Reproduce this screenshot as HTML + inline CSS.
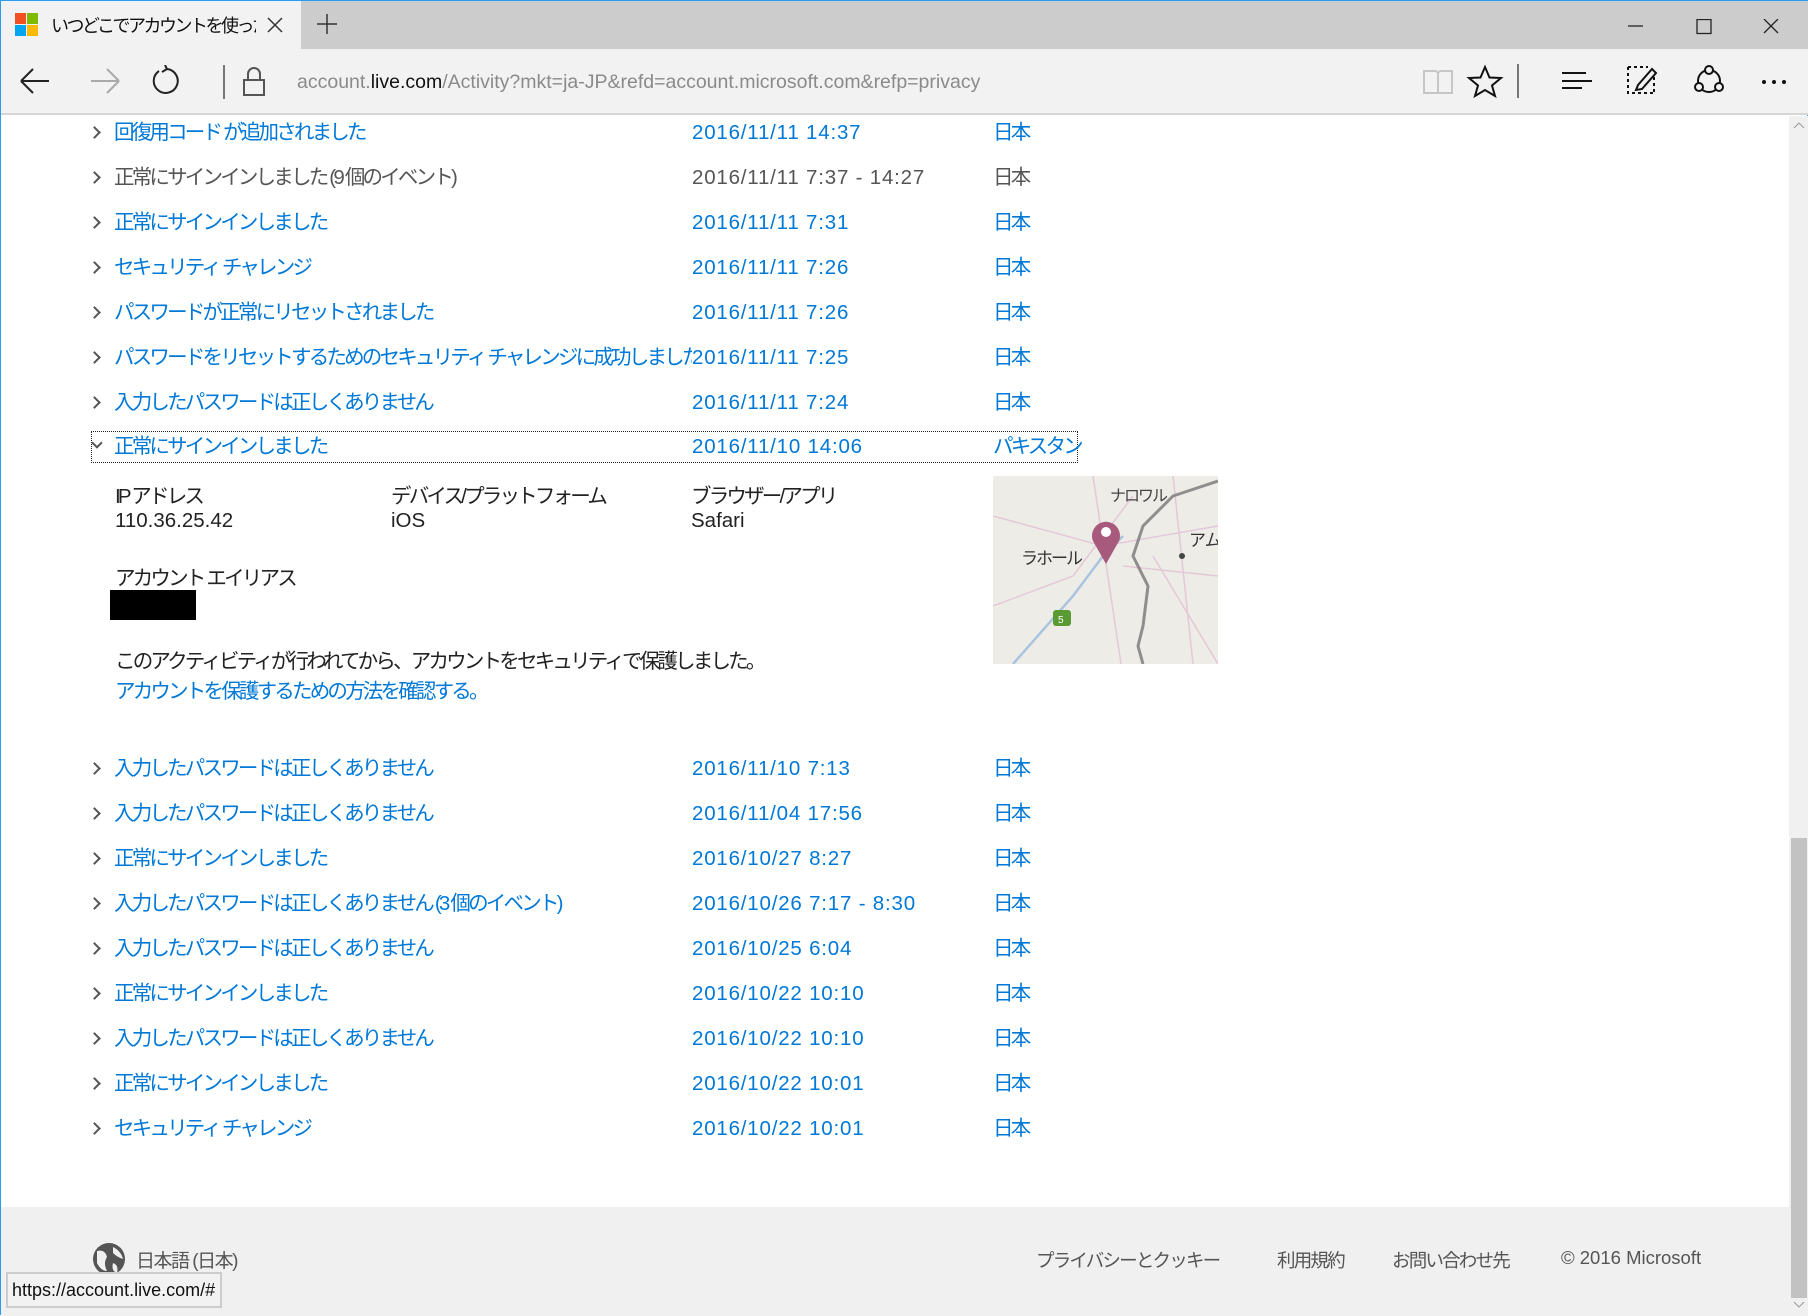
<!DOCTYPE html>
<html><head><meta charset="utf-8"><style>
*{margin:0;padding:0;box-sizing:border-box}
body{width:1808px;height:1315px;overflow:hidden;background:#fff;font-family:"Liberation Sans","Noto Sans CJK JP",sans-serif;position:relative;border:1px solid #2b9bf0}
.a{position:absolute;white-space:nowrap}
.tabbar{position:absolute;left:0;top:0;width:1808px;height:48px;background:#cccccc}
.tab{position:absolute;left:0;top:0;width:300px;height:48px;background:#f2f2f2}
.tool{position:absolute;left:0;top:48px;width:1808px;height:66px;background:#f2f2f2;border-bottom:2px solid #d6d6d6}
.r{position:absolute;font-size:20.5px;color:#0078d7;height:30px;line-height:30px;white-space:nowrap}
.j{letter-spacing:-2.8px}
.d{letter-spacing:0.8px}
.g{color:#555}
.chev{position:absolute;left:89px;width:9px;height:9px;border-right:2.5px solid #555;border-top:2.5px solid #555;transform:rotate(45deg)}
.k{color:#222;font-size:20.5px}
</style></head><body>
<div class="tabbar"></div>
<div class="tab"></div>
<svg class="a" style="left:14px;top:12px" width="24" height="24"><rect x="0" y="0" width="11" height="11" fill="#f25022"/><rect x="12" y="0" width="11" height="11" fill="#7fba00"/><rect x="0" y="12" width="11" height="11" fill="#00a4ef"/><rect x="12" y="12" width="11" height="11" fill="#ffb900"/></svg>
<div class="a" style="left:50px;top:11px;font-size:18px;color:#111;letter-spacing:-2.5px;width:205px;overflow:hidden">いつどこでアカウントを使った</div>
<svg class="a" style="left:266px;top:16px" width="16" height="16"><path d="M1 1L15 15M15 1L1 15" stroke="#333" stroke-width="1.5"/></svg>
<svg class="a" style="left:316px;top:13px" width="20" height="20"><path d="M10 0V20M0 10H20" stroke="#333" stroke-width="1.5"/></svg>
<svg class="a" style="left:1620px;top:18px" width="180" height="16"><path d="M7 7H22" stroke="#222" stroke-width="1.3"/><rect x="76" y="0.5" width="14" height="14" fill="none" stroke="#222" stroke-width="1.3"/><path d="M143 0L157 14M157 0L143 14" stroke="#222" stroke-width="1.3"/></svg>
<div class="tool"></div>
<svg class="a" style="left:18px;top:64px" width="400" height="36">
<path d="M2 16H30M2 16L14 4M2 16L14 28" stroke="#222" stroke-width="2" fill="none"/>
<path d="M72 16H100M100 16L88 4M100 16L88 28" stroke="#aaa" stroke-width="2" fill="none"/>
<path d="M140 6A12 12 0 1 0 148 4M146 0L148 4L143 7" stroke="#222" stroke-width="2" fill="none"/>
<path d="M205 -2V34" stroke="#777" stroke-width="2"/>
<rect x="225" y="15" width="20" height="15" fill="none" stroke="#555" stroke-width="2"/><path d="M229 15V9A6 6 0 0 1 241 9V15" stroke="#555" stroke-width="2" fill="none"/>
</svg>
<div class="a" style="left:296px;top:70px;font-size:19.5px;color:#8a8a8a">account.<span style="color:#111">live.com</span>/Activity?mkt=ja-JP&amp;refd=account.microsoft.com&amp;refp=privacy</div>
<svg class="a" style="left:1415px;top:62px" width="380" height="36">
<path d="M8 8H20L22 10L24 8H36V30H8Z M22 10V30" stroke="#c6c6c6" stroke-width="2" fill="none"/>
<path d="M69 4L73.5 14.5L85 15L76 22.5L79 33L69 27L59 33L62 22.5L53 15L64.5 14.5Z" stroke="#111" stroke-width="2" fill="none"/>
<path d="M102 1V35" stroke="#777" stroke-width="2"/>
<path d="M146 10H170M146 18H176M146 25H166" stroke="#111" stroke-width="2"/>
<path d="M212 4H232M212 4V30H238M238 14V30" stroke="#111" stroke-width="2" stroke-dasharray="3 3" fill="none"/><path d="M222 22L236 6L240 10L226 26L220 27Z" stroke="#111" stroke-width="2" fill="none"/>
<circle cx="293" cy="18" r="11" stroke="#111" stroke-width="2" fill="none"/><circle cx="293" cy="7" r="4" fill="#f2f2f2" stroke="#111" stroke-width="2"/><circle cx="283" cy="24" r="4" fill="#f2f2f2" stroke="#111" stroke-width="2"/><circle cx="303" cy="24" r="4" fill="#f2f2f2" stroke="#111" stroke-width="2"/>
<circle cx="348" cy="19" r="2" fill="#111"/><circle cx="358" cy="19" r="2" fill="#111"/><circle cx="368" cy="19" r="2" fill="#111"/>
</svg>

<div class="chev" style="top:127px"></div><div class="r j" style="left:113px;top:117px">回復用コード が追加されました</div><div class="r d" style="left:691px;top:117px">2016/11/11 14:37</div><div class="r j" style="left:992px;top:117px">日本</div>
<div class="chev" style="top:172px"></div><div class="r g j" style="left:113px;top:162px">正常にサインインしました (9 個のイベント)</div><div class="r g d" style="left:691px;top:162px">2016/11/11 7:37 - 14:27</div><div class="r g j" style="left:992px;top:162px">日本</div>
<div class="chev" style="top:217px"></div><div class="r j" style="left:113px;top:207px">正常にサインインしました</div><div class="r d" style="left:691px;top:207px">2016/11/11 7:31</div><div class="r j" style="left:992px;top:207px">日本</div>
<div class="chev" style="top:262px"></div><div class="r j" style="left:113px;top:252px">セキュリティ チャレンジ</div><div class="r d" style="left:691px;top:252px">2016/11/11 7:26</div><div class="r j" style="left:992px;top:252px">日本</div>
<div class="chev" style="top:307px"></div><div class="r j" style="left:113px;top:297px">パスワードが正常にリセットされました</div><div class="r d" style="left:691px;top:297px">2016/11/11 7:26</div><div class="r j" style="left:992px;top:297px">日本</div>
<div class="chev" style="top:352px"></div><div class="r j" style="left:113px;top:342px">パスワードをリセットするためのセキュリティ チャレンジに成功しました</div><div class="r d" style="left:691px;top:342px;background:#fff;padding-left:0">2016/11/11 7:25</div><div class="r j" style="left:992px;top:342px">日本</div>
<div class="chev" style="top:397px"></div><div class="r j" style="left:113px;top:387px">入力したパスワードは正しくありません</div><div class="r d" style="left:691px;top:387px">2016/11/11 7:24</div><div class="r j" style="left:992px;top:387px">日本</div>

<div class="a" style="left:90px;top:430px;width:987px;height:32px;border:1px dotted #222"></div>
<div class="chev" style="top:438px;transform:rotate(135deg);left:92px;width:8px;height:8px"></div>
<div class="r j" style="left:113px;top:431px">正常にサインインしました</div><div class="r d" style="left:691px;top:431px">2016/11/10 14:06</div><div class="r j" style="left:992px;top:431px">パキスタン</div>

<div class="a k j" style="left:114px;top:478px">IP アドレス</div>
<div class="a k j" style="left:390px;top:478px">デバイス/プラットフォーム</div>
<div class="a k j" style="left:690px;top:478px">ブラウザー/アプリ</div>
<div class="a k" style="left:114px;top:508px">110.36.25.42</div>
<div class="a k" style="left:390px;top:508px">iOS</div>
<div class="a k" style="left:690px;top:508px">Safari</div>
<div class="a k j" style="left:114px;top:560px">アカウント エイリアス</div>
<div class="a" style="left:109px;top:589px;width:86px;height:30px;background:#000"></div>
<div class="a k j" style="left:114px;top:643px">このアクティビティが行われてから、アカウントをセキュリティで保護しました。</div>
<div class="a j" style="left:114px;top:673px;font-size:20.5px;color:#0078d7">アカウントを保護するための方法を確認する。</div>

<svg class="a" style="left:992px;top:475px" width="225" height="188">
<rect width="225" height="188" fill="#eeece7"/>
<path d="M0 40L110 70L225 50M0 130L80 100L140 20M100 0L128 188M130 90L225 100M160 80L225 188M180 0L200 188" stroke="#e4c8d8" stroke-width="1.5" fill="none"/>
<path d="M20 188L80 120L110 80L130 60" stroke="#a8c4e0" stroke-width="2.5" fill="none"/>
<path d="M225 5L180 20L150 50L140 80L155 110L150 150L145 170L150 188" stroke="#777" stroke-width="3" fill="none" opacity=".8"/>
<text x="117" y="25" font-size="16" fill="#444" font-family="Noto Sans CJK JP" letter-spacing="-2">ナロワル</text>
<text x="28" y="88" font-size="17" fill="#333" font-family="Noto Sans CJK JP" letter-spacing="-2">ラホール</text>
<text x="196" y="70" font-size="17" fill="#333" font-family="Noto Sans CJK JP">アム</text>
<circle cx="189" cy="80" r="3" fill="#444"/>
<path d="M113 88L100 65A14 14 0 1 1 126 65Z" fill="#a85a7d"/><circle cx="113" cy="56" r="5" fill="#fff"/>
<rect x="60" y="134" width="18" height="16" rx="3" fill="#5a9a32"/><text x="65" y="147" font-size="10" fill="#fff" font-family="Liberation Sans">5</text>
</svg>

<div class="chev" style="top:763px"></div><div class="r j" style="left:113px;top:753px">入力したパスワードは正しくありません</div><div class="r d" style="left:691px;top:753px">2016/11/10 7:13</div><div class="r j" style="left:992px;top:753px">日本</div>
<div class="chev" style="top:808px"></div><div class="r j" style="left:113px;top:798px">入力したパスワードは正しくありません</div><div class="r d" style="left:691px;top:798px">2016/11/04 17:56</div><div class="r j" style="left:992px;top:798px">日本</div>
<div class="chev" style="top:853px"></div><div class="r j" style="left:113px;top:843px">正常にサインインしました</div><div class="r d" style="left:691px;top:843px">2016/10/27 8:27</div><div class="r j" style="left:992px;top:843px">日本</div>
<div class="chev" style="top:898px"></div><div class="r j" style="left:113px;top:888px">入力したパスワードは正しくありません (3 個のイベント)</div><div class="r d" style="left:691px;top:888px">2016/10/26 7:17 - 8:30</div><div class="r j" style="left:992px;top:888px">日本</div>
<div class="chev" style="top:943px"></div><div class="r j" style="left:113px;top:933px">入力したパスワードは正しくありません</div><div class="r d" style="left:691px;top:933px">2016/10/25 6:04</div><div class="r j" style="left:992px;top:933px">日本</div>
<div class="chev" style="top:988px"></div><div class="r j" style="left:113px;top:978px">正常にサインインしました</div><div class="r d" style="left:691px;top:978px">2016/10/22 10:10</div><div class="r j" style="left:992px;top:978px">日本</div>
<div class="chev" style="top:1033px"></div><div class="r j" style="left:113px;top:1023px">入力したパスワードは正しくありません</div><div class="r d" style="left:691px;top:1023px">2016/10/22 10:10</div><div class="r j" style="left:992px;top:1023px">日本</div>
<div class="chev" style="top:1078px"></div><div class="r j" style="left:113px;top:1068px">正常にサインインしました</div><div class="r d" style="left:691px;top:1068px">2016/10/22 10:01</div><div class="r j" style="left:992px;top:1068px">日本</div>
<div class="chev" style="top:1123px"></div><div class="r j" style="left:113px;top:1113px">セキュリティ チャレンジ</div><div class="r d" style="left:691px;top:1113px">2016/10/22 10:01</div><div class="r j" style="left:992px;top:1113px">日本</div>

<div class="a" style="left:0;top:1206px;width:1788px;height:109px;background:#f0f0f0"></div>
<svg class="a" style="left:90px;top:1240px" width="36" height="36"><circle cx="18" cy="18" r="16" fill="#555"/><path d="M6 10Q14 8 16 16Q12 22 16 30Q10 30 6 22Z M22 6Q30 10 32 18Q26 16 22 12Z M22 22Q28 24 26 32Q20 30 22 22Z" fill="#f0f0f0"/></svg>
<div class="a" style="left:135px;top:1245px;font-size:19px;color:#555;letter-spacing:-1.5px">日本語 (日本)</div>
<div class="a" style="left:1035px;top:1246px;font-size:18.5px;color:#555;letter-spacing:-1.8px">プライバシーとクッキー</div>
<div class="a" style="left:1276px;top:1246px;font-size:18.5px;color:#555;letter-spacing:-1.8px">利用規約</div>
<div class="a" style="left:1391px;top:1246px;font-size:18.5px;color:#555;letter-spacing:-1.8px">お問い合わせ先</div>
<div class="a" style="left:1560px;top:1246px;font-size:18.5px;color:#555">© 2016 Microsoft</div>
<div class="a" style="left:5px;top:1271px;width:216px;height:36px;background:#f2f2f2;border:2px solid #ccc;font-size:18px;color:#111;line-height:32px;padding-left:4px">https://account.live.com/#</div>

<div class="a" style="left:1788px;top:115px;width:20px;height:1200px;background:#f0f0f0"></div>
<div class="a" style="left:1790px;top:837px;width:16px;height:460px;background:#c2c2c2"></div>
<svg class="a" style="left:1790px;top:118px" width="16" height="12"><path d="M3 9L8 4L13 9" stroke="#999" fill="none"/></svg>
<svg class="a" style="left:1790px;top:1298px" width="16" height="12"><path d="M3 3L8 8L13 3" stroke="#999" fill="none"/></svg>
</body></html>
